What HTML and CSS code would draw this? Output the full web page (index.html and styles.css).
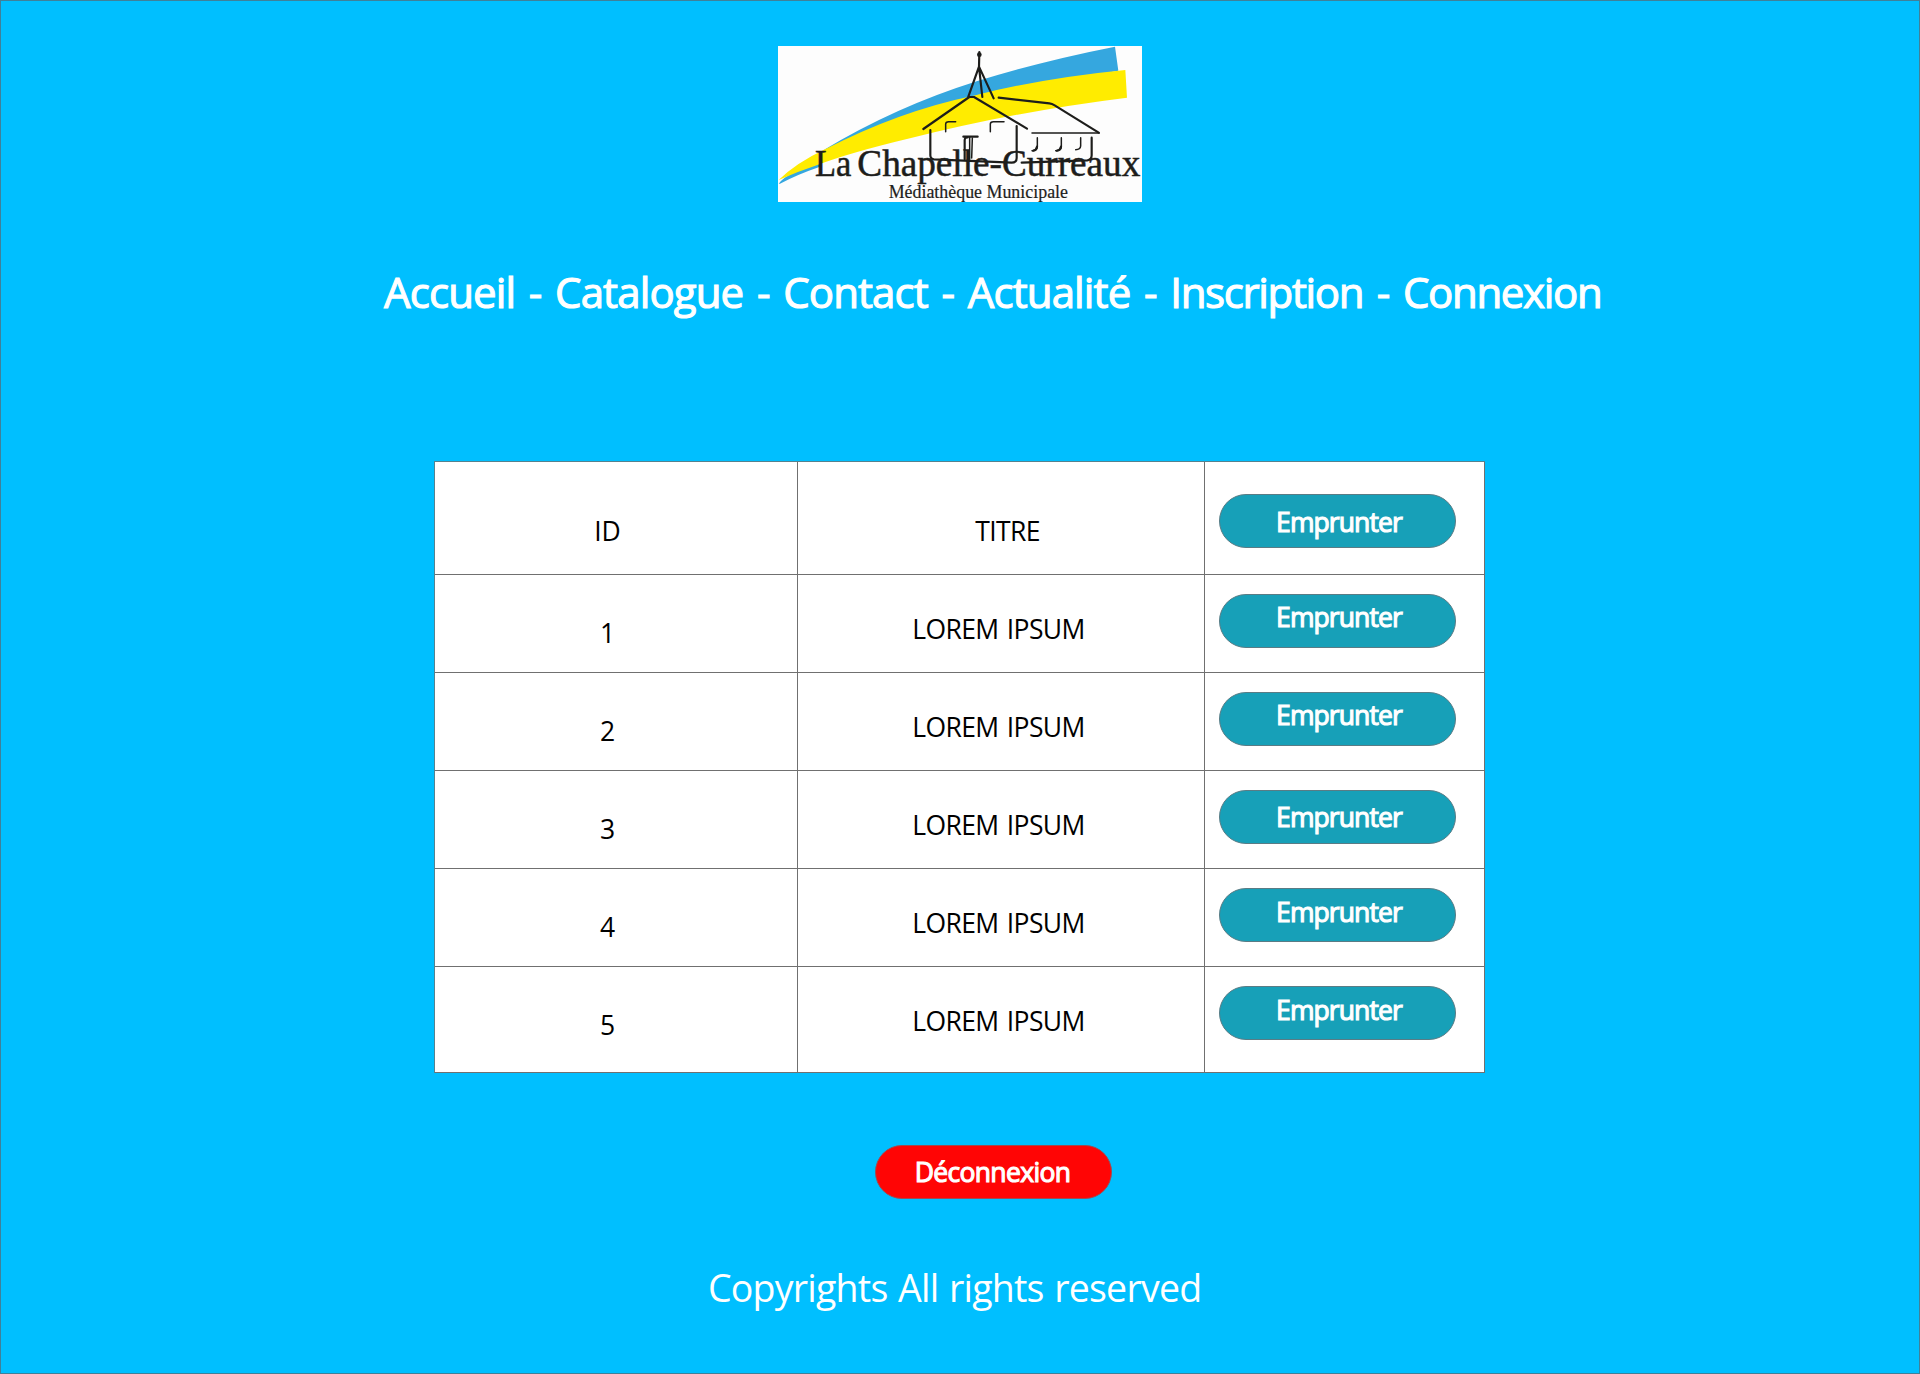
FILE: index.html
```html
<!DOCTYPE html>
<html lang="fr">
<head>
<meta charset="utf-8">
<title>La Chapelle-Curreaux - Médiathèque Municipale</title>
<link rel="stylesheet" href="styles.css">
</head>
<body>
<div class="page">
  <header class="header">
    <svg class="logo" viewBox="24 30 1092 468" role="img" aria-label="La Chapelle-Curreaux">
      <rect x="24" y="30" width="1092" height="468" fill="#fdfdfd"/>
      <path d="M160 343Q375 213 620 136Q820 74 1035 32L1045 104L800 150L400 260Z" fill="#35a7df"/>
      <path d="M26 443Q40 424 70 410L150 380V392Q80 416 30 443Z" fill="#35a7df"/>
      <path d="M26 432Q80 380 165 340Q385 226 610 179Q820 126 1066 102L1071 185Q740 226 420 307Q240 350 140 388Q80 408 26 432Z" fill="#ffec00"/>
      <g class="ink">
        <circle cx="628" cy="56" r="7" fill="#1d1d1b" stroke="none"/>
        <path d="M628 48L627 92L595 182M627 92L637 183M627 92L671 187"/>
        <path d="M460 279L598 183H612L771 278M686 185L838 202Q846 203 854 208L986 290"/>
        <path class="thin" d="M786 291H988"/>
        <path d="M481 282V358Q481 369 492 370L725 380Q740 380 740 366V270M755 380L952 373Q965 372 965 358V305"/>
        <path class="thin" d="M527 287V264Q527 257 536 257H557M661 287V264Q661 257 670 257H702"/>
        <path d="M580 302H623M584 370V312Q585 303 593 304"/>
        <path class="thin" d="M599 304V370M607 306L605 366"/>
        <path class="thin" d="M802 305V333Q801 345 786 344M874 305V333Q873 345 857 344M932 305V330Q931 341 917 341"/>
        <path d="M801 332Q799 342 790 344M873 332Q871 342 861 344"/>
      </g>
      <g class="brand">
        <text x="135" y="420" textLength="109" lengthAdjust="spacingAndGlyphs">La</text>
        <text x="262" y="420" textLength="849" lengthAdjust="spacingAndGlyphs">Chapelle-Curreaux</text>
      </g>
      <text class="tagline" x="356" y="485" textLength="538" lengthAdjust="spacingAndGlyphs">Médiathèque Municipale</text>
    </svg>
    <nav class="nav">Accueil - Catalogue - Contact - Actualité - <span class="tight">Inscription</span> - <span class="tight">Connexion</span></nav>
  </header>
  <main class="main">
    <div class="table">
      <div class="cell id head">ID</div><div class="cell title head">TITRE</div><div class="cell action head"><button class="button">Emprunter</button></div>
      <div class="cell id">1</div><div class="cell title">LOREM IPSUM</div><div class="cell action"><button class="button high">Emprunter</button></div>
      <div class="cell id">2</div><div class="cell title">LOREM IPSUM</div><div class="cell action"><button class="button high">Emprunter</button></div>
      <div class="cell id">3</div><div class="cell title">LOREM IPSUM</div><div class="cell action"><button class="button low">Emprunter</button></div>
      <div class="cell id">4</div><div class="cell title">LOREM IPSUM</div><div class="cell action"><button class="button raised">Emprunter</button></div>
      <div class="cell id">5</div><div class="cell title">LOREM IPSUM</div><div class="cell action"><button class="button raised">Emprunter</button></div>
    </div>
    <button class="button logout">Déconnexion</button>
  </main>
  <footer class="footer">Copyrights All rights reserved</footer>
</div>
</body>
</html>
```
FILE: styles.css
```css
* { box-sizing: border-box; }
body { margin: 0; background: #00bfff; }
.page {
  height: 1374px;
  border: 1px solid #3f8099;
  font-family: "Open Sans", sans-serif;
  color: #fff;
  display: flex;
  flex-direction: column;
}
.header { display: flex; flex-direction: column; align-items: center; padding-top: 45px; }
.logo { display: block; width: 364px; height: 156px; overflow: visible; }
.ink { fill: none; stroke: #1d1d1b; stroke-width: 6.5; stroke-linecap: round; stroke-linejoin: round; }
.ink .thin { stroke-width: 4.5; }
.brand { font: 114px "Liberation Serif", serif; fill: #1d1d1b; stroke: #1d1d1b; stroke-width: 1.6; }
.tagline { font: 54px "Liberation Serif", serif; fill: #1d1d1b; stroke: #1d1d1b; stroke-width: .6; }
.nav {
  align-self: flex-start;
  margin: 60px 0 0 383px;
  font-size: 42px;
  line-height: 60px;
  letter-spacing: -0.88px;
  word-spacing: 3.6px;
  white-space: nowrap;
  -webkit-text-stroke: 1.1px #fff;
}
.tight { letter-spacing: -1.35px; }
.main { display: flex; flex-direction: column; align-items: flex-start; padding: 139px 0 0 433px; }
.table {
  display: grid;
  grid-template-columns: 363px 407px 280px;
  grid-template-rows: 113px repeat(4, 98px) 106px;
  border: solid #55828f;
  border-width: 1px 0 0 1px;
  background: #fff;
  color: #000;
}
.cell { border: solid #707070; border-width: 0 1px 1px 0; font-size: 26.5px; line-height: 36px; text-align: center; }
.id { padding: 40px 17px 0 0; }
.title { padding: 36px 5px 0 0; letter-spacing: -0.6px; word-spacing: 2px; }
.id.head, .title.head { padding-top: 51px; }
.title.head { padding-left: 18px; }
.action { padding: 19px 0 0 14px; text-align: left; }
.action.head { padding-top: 32px; }
.button {
  display: block;
  width: 237px;
  height: 54px;
  padding: 1px 0 0 3px;
  border: 1px solid #5a7c85;
  border-radius: 27px;
  background: #17a0b8;
  color: #fff;
  font: 26.5px/36px "Open Sans", sans-serif;
  letter-spacing: -0.9px;
  -webkit-text-stroke: 1.1px #fff;
}
.low { padding-bottom: 2px; }
.raised { padding-bottom: 8px; }
.high { padding-bottom: 10px; }
.logout { margin: 72px 0 0 441px; background: #ff0505; border-color: #a04a50; padding: 0 2px 1px 0; letter-spacing: -0.65px; }
.footer { margin: 63px 0 0 707px; font-size: 37.5px; line-height: 52px; letter-spacing: -0.78px; word-spacing: 1.6px; white-space: nowrap; }
```
